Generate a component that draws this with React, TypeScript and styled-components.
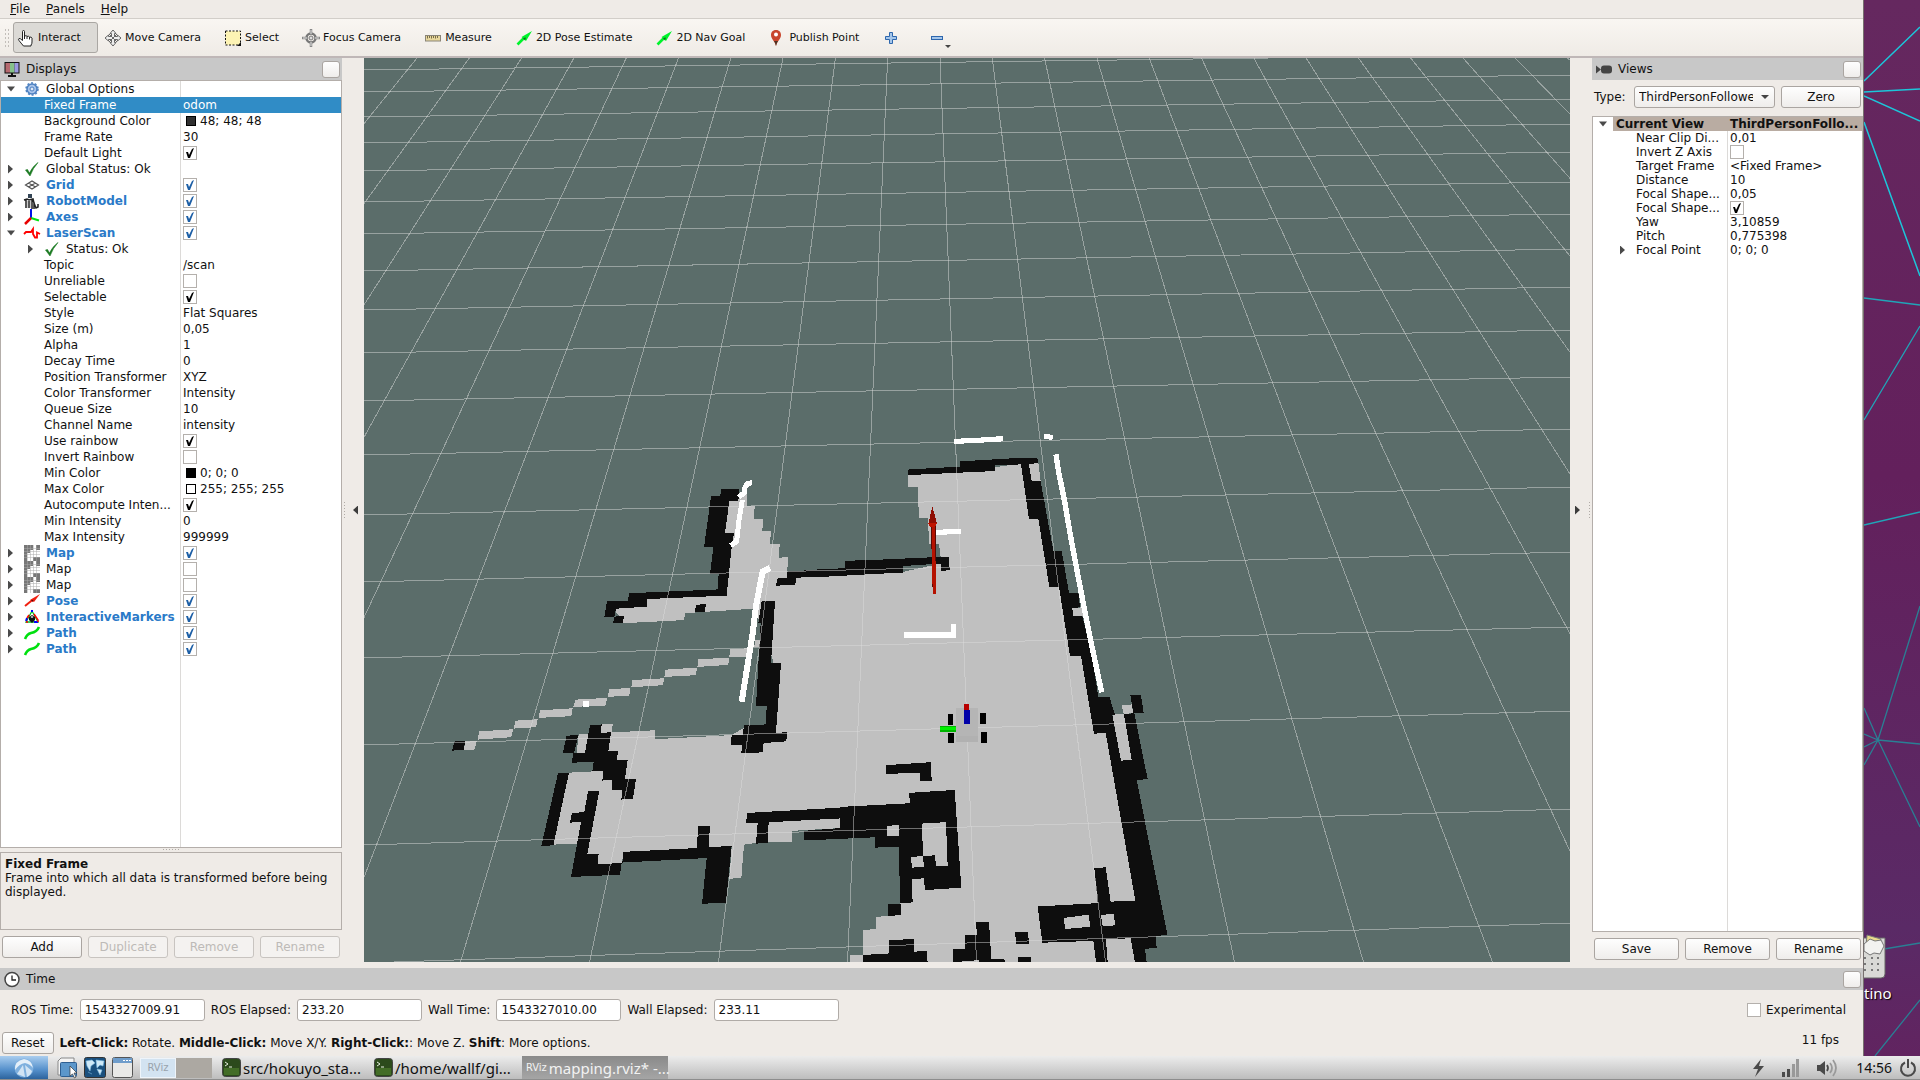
import React from "react";
import styled, { createGlobalStyle, css } from "styled-components";

const GlobalStyle = createGlobalStyle`
  * { box-sizing: border-box; }
  body {
    margin: 0;
    font: 12px/16px "DejaVu Sans", sans-serif;
    color: #111;
    background: #efebe7;
  }
  button, input, select { font: inherit; color: inherit; margin: 0; }
`;

const line = "#b4aeaa";

const raised = css`
  border: 1px solid #aaa5a1;
  border-radius: 3px;
  background: linear-gradient(#fefefe, #efedeb);
`;

/* ---------- shell ---------- */

const Screen = styled.div`
  display: flex;
  flex-direction: column;
  height: 100vh;
  min-height: 760px;
  overflow: hidden;
`;

const Desk = styled.div`
  flex: 1;
  min-height: 0;
  display: grid;
  grid-template-columns: minmax(0, 1fr) 56px;
`;

const Window = styled.main`
  display: flex;
  flex-direction: column;
  min-height: 0;
  border-right: 1px solid #77706f;
  background: #efebe7;
`;

const MenuBar = styled.nav`
  display: flex;
  flex: none;
  height: 19px;
  padding-left: 2px;
  border-bottom: 1px solid #d2cec9;
`;

const MenuItem = styled.button`
  border: 0;
  background: none;
  padding: 0 8px;
  line-height: 16px;
  &::first-letter { text-decoration: underline; }
`;

const ToolBar = styled.div`
  display: flex;
  flex: none;
  align-items: center;
  gap: 2px;
  height: 39px;
  padding-left: 4px;
  background: linear-gradient(#f9f6f2, #efebe6);
  border-bottom: 2px solid #bfb7b7;
  font-size: 11px;
`;

const Grip = styled.div`
  flex: none;
  width: 5px;
  height: 20px;
  margin-right: 2px;
  background: radial-gradient(circle, #c2beb9 1px, transparent 1px) 0 0 / 3px 4px;
`;

const ToolButton = styled.button<{ $active?: boolean }>`
  display: flex;
  align-items: center;
  gap: 4px;
  height: 31px;
  padding: 0 16px 0 4px;
  border: 1px solid transparent;
  border-radius: 3px;
  background: none;
  white-space: nowrap;
  ${(p) => p.$active && css`border-color: #aaa7a3; background: #dcdad6;`}
`;

const ToolIconButton = styled(ToolButton)`
  width: 44px;
  padding-right: 0;
  gap: 0;
`;

const Caret = styled.span`
  align-self: flex-end;
  margin-bottom: 4px;
  border: 3px solid transparent;
  border-top-color: #444;
  border-bottom: 0;
`;

const Icon = styled.svg`
  flex: none;
  display: block;
  overflow: visible;
`;

const Workspace = styled.div`
  flex: 1;
  min-height: 0;
  display: grid;
  grid-template-columns: 342px 22px minmax(0, 1fr) 22px 271px;
`;

const Side = styled.aside`
  display: flex;
  flex-direction: column;
  min-height: 0;
`;

const PanelHeader = styled.header`
  display: flex;
  flex: none;
  align-items: center;
  gap: 6px;
  height: 22px;
  padding: 0 2px 0 4px;
  background: #c8c8c8;
`;

const PanelTitle = styled.h2`
  flex: 1;
  margin: 0;
  font-size: 12px;
  font-weight: 400;
`;

const CloseButton = styled.button`
  ${raised}
  width: 18px;
  height: 17px;
  padding: 0;
`;

const Edge = styled.div<{ $flip?: boolean }>`
  display: flex;
  align-items: center;
  justify-content: space-between;
  flex-direction: ${(p) => (p.$flip ? "row-reverse" : "row")};
  padding: ${(p) => (p.$flip ? "0 2px 0 5px" : "0 6px 0 2px")};
`;

const EdgeGrip = styled.i`
  width: 1px;
  height: 17px;
  background: repeating-linear-gradient(#b0aba6 0 1px, transparent 1px 3px);
`;

const RowGrip = styled.i`
  flex: none;
  width: 17px;
  height: 1px;
  margin: 1px auto 2px;
  background: repeating-linear-gradient(to right, #b0aba6 0 1px, transparent 1px 3px);
`;

const EdgeButton = styled.button<{ $flip?: boolean }>`
  width: 5px;
  height: 9px;
  padding: 0;
  border: 0;
  background: #3c3c3c;
  clip-path: ${(p) => (p.$flip ? "polygon(0 0, 100% 50%, 0 100%)" : "polygon(100% 0, 0 50%, 100% 100%)")};
`;

/* ---------- property tree ---------- */

const TreeBox = styled.div<{ $split: number }>`
  flex: 1;
  min-height: 0;
  overflow: hidden;
  border: 1px solid ${line};
  background: linear-gradient(#dcdad8, #dcdad8) ${(p) => p.$split}px 0 / 1px 100% no-repeat #fff;
`;

const Tree = styled.table<{ $row: number }>`
  width: 100%;
  table-layout: fixed;
  border-collapse: collapse;
  td { padding: 0; height: ${(p) => p.$row}px; }
  td > div { height: ${(p) => p.$row}px; line-height: ${(p) => p.$row}px; }
`;

const Row = styled.tr<{ $selected?: boolean; $head?: boolean }>`
  ${(p) => p.$selected && css`background: #308cc6; color: #fff;`}
  ${(p) => p.$head && css`
    font-weight: 700;
    background: linear-gradient(to right, #fff 20px, #b9aca2 20px);
  `}
`;

const NameCell = styled.div<{ $indent: number; $enabled?: boolean }>`
  display: flex;
  align-items: center;
  padding-left: ${(p) => p.$indent}px;
  white-space: nowrap;
  overflow: visible;
  ${(p) => p.$enabled && css`color: #2a7ac8; font-weight: 700;`}
`;

const ValueCell = styled.div`
  display: flex;
  align-items: center;
  gap: 4px;
  padding-left: 3px;
  white-space: nowrap;
`;

const Twisty = styled.button<{ $open?: boolean }>`
  flex: none;
  width: 8px;
  height: 9px;
  padding: 0;
  border: 0;
  background: #4a4a4a;
  clip-path: ${(p) => (p.$open ? "polygon(0 2px, 100% 2px, 50% 7px)" : "polygon(1px 0, 6px 50%, 1px 100%)")};
`;

const IconSlot = styled.span`
  flex: none;
  width: 16px;
  height: 16px;
  margin: 0 6px 0 9px;
`;

const IconGap = styled.span`
  flex: none;
  width: 9px;
`;

const Swatch = styled.i<{ $color: string }>`
  width: 10px;
  height: 10px;
  margin-left: 3px;
  border: 1px solid #000;
  background: ${(p) => p.$color};
`;

const Check = styled.input<{ $tone?: string }>`
  appearance: none;
  flex: none;
  width: 14px;
  height: 14px;
  border: 1px solid #b4b0ac;
  background: #fff;
  &:checked::after {
    content: "";
    display: block;
    width: 12px;
    height: 12px;
    background: ${(p) => p.$tone || "#000"};
    clip-path: polygon(2px 5px, 4px 5px, 5px 8px, 8px 2px, 10px 1px, 6px 11px, 4px 11px);
  }
`;

const HelpBox = styled.section`
  flex: none;
  height: 78px;
  padding: 4px;
  border: 1px solid ${line};
  line-height: 14px;
`;

const HelpTitle = styled.h3`
  margin: 0;
  font-size: 12px;
`;

const ButtonRow = styled.div<{ $flush?: boolean }>`
  display: grid;
  flex: none;
  grid-auto-flow: column;
  grid-auto-columns: 1fr;
  gap: 6px;
  padding: 6px 2px ${(p) => (p.$flush ? 2 : 4)}px;
`;

const PushButton = styled.button`
  ${raised}
  height: 22px;
  padding: 0 8px;
  line-height: 18px;
  &:disabled { color: #bdbab7; border-color: #c8c4c0; background: #f4f2f0; }
`;

const TypeRow = styled.div`
  display: grid;
  flex: none;
  grid-template-columns: auto 141px 80px;
  align-items: center;
  gap: 6px;
  padding: 6px 2px 8px;
`;

const SelectWrap = styled.span`
  position: relative;
  display: flex;
  &::after {
    content: "";
    position: absolute;
    right: 6px;
    top: 9px;
    border: 4px solid transparent;
    border-top-color: #444;
    border-bottom: 0;
    pointer-events: none;
  }
`;

const Select = styled.select`
  ${raised}
  appearance: none;
  width: 100%;
  height: 22px;
  padding: 0 21px 0 4px;
`;

const SceneBox = styled.section`
  min-height: 0;
  overflow: hidden;
  background: #5b6d6a;
  svg { display: block; width: 100%; height: 100%; }
`;

/* ---------- bottom ---------- */

const TimeHeader = styled(PanelHeader)`margin-top: 6px;`;

const TimeRow = styled.div`
  display: flex;
  flex: none;
  align-items: center;
  gap: 6px;
  height: 40px;
  padding: 0 17px 0 11px;
`;

const Field = styled.input`
  width: 125px;
  height: 22px;
  padding: 0 4px;
  border: 1px solid #b0aba7;
  border-radius: 3px;
  background: #fff;
`;

const Experimental = styled.label`
  display: flex;
  align-items: center;
  gap: 5px;
  margin-left: auto;
`;

const StatusRow = styled.footer`
  display: flex;
  flex: none;
  align-items: center;
  gap: 6px;
  height: 26px;
  padding: 0 24px 0 2px;
`;

const Fps = styled.output`
  margin: 2px 0 0 auto;
  align-self: flex-start;
`;

const TaskBar = styled.footer`
  display: flex;
  flex: none;
  align-items: center;
  height: 24px;
  background: linear-gradient(#ececec, #bdbdbd);
  border-bottom: 1px solid #8d8d8d;
  font: 15px/22px "Noto Sans", sans-serif;
`;

const StartButton = styled.button`
  display: grid;
  place-items: center;
  width: 48px;
  height: 23px;
  margin-right: 8px;
  padding: 0;
  border: 0;
  background: linear-gradient(#a9cdef, #5590cb 60%, #2c639d);
`;

const Launcher = styled.button`
  width: 28px;
  height: 23px;
  padding: 0;
  border: 0;
  background: none;
`;

const Page = styled.button<{ $current?: boolean }>`
  display: grid;
  place-items: center;
  width: 36px;
  height: 20px;
  padding: 0;
  border: 1px solid ${(p) => (p.$current ? "#eef4fa" : "#aca8a2")};
  background: ${(p) => (p.$current ? "#d3e3f1" : "#aca8a2")};
  color: #98a2ac;
  font: 10px/16px "DejaVu Sans", sans-serif;
`;

const Task = styled.button<{ $active?: boolean }>`
  display: flex;
  align-items: center;
  gap: 2px;
  width: 152px;
  height: 23px;
  padding: 0 0 0 10px;
  border: 0;
  background: none;
  white-space: nowrap;
  ${(p) => p.$active && css`
    width: 146px;
    margin-left: 6px;
    padding-left: 4px;
    background: linear-gradient(#8a8a8a, #a5a5a5);
    color: #f2f2f2;
  `}
`;

const TaskMark = styled.span`
  font: 11px/20px "DejaVu Sans Condensed", "DejaVu Sans", sans-serif;
`;

const Tray = styled.div`
  display: flex;
  align-items: center;
  margin-left: auto;
  gap: 17px;
  padding-right: 4px;
`;

const Clock = styled.time`
  font-size: 14px;
  margin-right: -9px;
`;

const Wallpaper = styled.div`
  position: relative;
  overflow: hidden;
  background: linear-gradient(#65285f, #63205c 45%, #5a2a66 88%, #612460);
  > svg { display: block; }
`;

const TrashLabel = styled.span`
  position: absolute;
  left: 0;
  top: 983px;
  color: #fff;
  font: 15px/20px "Noto Sans", sans-serif;
  text-shadow: 1px 1px 1px #000;
`;

/* ---------- small drawings ---------- */

type IconName =
  | "hand" | "move" | "select" | "focus" | "ruler" | "arrow" | "pin" | "plus" | "minus"
  | "monitor" | "gear" | "ok" | "grid" | "robot" | "axes" | "laser" | "map" | "pose"
  | "markers" | "path" | "camera" | "clock";

const glyphs: Record<IconName, React.ReactNode> = {
  hand: <path d="M4.500 10V1.500Q4.500.5 5.500.5t1 1V6q2-.8 2.500.4 2-.6 2.500.7 2-.4 2.500 1V12q0 2-1 3v1H5.500Q3 13 1 10.500 0 9 1 8.500q1-.5 3.500 2zM6.500 6v3M9 6.500V9M11.500 7v2.500" fill="#fff" stroke="#222" />,
  move: <path d="M8 0l3 3.500H9.500V6.500H12.500V5L16 8l-3.500 3V9.500H9.500V12.500H11L8 16l-3-3.500h1.500V9.500H3.500V11L0 8l3.500-3v1.500h3V3.500H5z M4 4l8 8M12 4l-8 8" fill="#eee" stroke="#666" />,
  select: <><rect x=".5" y="1" width="15" height="14" fill="#fdf3b4" stroke="#111" strokeDasharray="2 1.500" /><path d="M16 12v4h-4z" fill="#111" /></>,
  focus: <><circle cx="8" cy="8" r="4.500" fill="none" stroke="#777" strokeWidth="2.500" /><circle cx="8" cy="8" r="2" fill="#ddd" stroke="#777" /><path d="M8-1v5M8 12v5M-1 8h5M12 8h5" stroke="#888" strokeWidth="2.500" /><path d="M8 0v4M8 12v4M0 8h4M12 8h4" stroke="#ddd" /></>,
  ruler: <><rect x=".5" y="5.500" width="15" height="5.500" fill="#e8d79c" stroke="#8a8578" /><path d="M2.500 6v2.500M4.500 6v2M6.500 6v2.500M8.500 6v2M10.500 6v2.500M12.500 6v2" stroke="#776c48" /></>,
  arrow: <><path d="M1.500 14.500L9 7" stroke="#00f32c" strokeWidth="2.600" /><path d="M5.500 7L16 1 10 11z" fill="#00f32c" /><path d="M7 8l3-.5-1 3z" fill="#087018" /></>,
  pin: <><path d="M7 0C3.500 0 2 2.500 2 5c0 4 4 6 5 11 1-5 5-7 5-11 0-2.500-1.500-5-5-5z" fill="#c8452c" /><path d="M5 11q1.500 2 2 5 .5-3 2-5z" fill="#4a3324" /><circle cx="7" cy="4.500" r="2" fill="#fff" /></>,
  plus: <path d="M6.500 2.500h3v4h4v3h-4v4h-3v-4h-4v-3h4z" fill="#a5c6ea" stroke="#2d66ad" />,
  minus: <rect x="2.500" y="6.500" width="11" height="3" fill="#a5c6ea" stroke="#2d66ad" />,
  monitor: <><rect x=".5" y="1" width="15" height="11.500" fill="#111" /><path d="M1.500 2h4.500v9.500H1.500z" fill="#b56a70" /><path d="M6 2h4.500v9.500H6z" fill="#86c28a" /><path d="M10.500 2h4v9.500h-4z" fill="#9a9ae0" /><path d="M7 12h2v2h3v2H4v-2h3z" fill="#111" /></>,
  gear: <><circle cx="8" cy="8" r="5" fill="#a9c4ea" stroke="#4d80c0" strokeWidth="1.500" /><circle cx="8" cy="8" r="6" fill="none" stroke="#4d80c0" strokeWidth="1.500" strokeDasharray="2 1.800" /><circle cx="8" cy="8" r="2" fill="#dfe9f7" stroke="#4d80c0" /></>,
  ok: <path d="M1.500 9l2-.5 2 3.500Q8 6 14 1.500 9 7 6 15z" fill="#1b7a22" stroke="#1b7a22" strokeWidth=".6" />,
  grid: <path d="M1.500 8L8 4l6.500 4L8 12zM4.500 6l7 4M11.500 6l-7 4" fill="none" stroke="#555" strokeWidth="1.200" />,
  robot: <><path d="M4 1h4v4H4z" fill="#345" /><path d="M0 7l3-1 2 1 4-1 1 4 2 5 2-1v-3M2 7v8M5 8v7M8 7v9M10 9v7" fill="none" stroke="#222" strokeWidth="1.500" /><path d="M3.500 8v7M6.500 8v7" stroke="#ccc" /></>,
  axes: <><path d="M7 9V0" stroke="#0010e8" strokeWidth="2" /><path d="M7 9l8 2.500" stroke="#00e010" strokeWidth="2" /><path d="M7 9l-6 6" stroke="#e80000" strokeWidth="2.500" /></>,
  laser: <path d="M0 9L2 7H7L9 4V9L11 12.500H13V7.500L16 9" fill="none" stroke="#f00" strokeWidth="1.800" />,
  map: <><path d="M0 0h16v16H0z" fill="#fff" /><path d="M0 0h9v5H6v3H3v8H0zM12 0h4v5h-4zM9 12h7v4H9z" fill="#777" /><path d="M3.500 0v16M6.500 0v16M9.500 0v16M12.500 0v16M0 3.500h16M0 6.500h16M0 9.500h16M0 12.500h16" stroke="#aaa" strokeWidth=".5" /></>,
  pose: <><path d="M1 13L9 6.500" stroke="#f02010" strokeWidth="2" /><path d="M6 7L16 1 10 9z" fill="#f02010" /><path d="M7 7l2.500 0-1 2z" fill="#600" /></>,
  markers: <><path d="M8 2L2 13h12z" fill="none" stroke="#00c020" strokeWidth="1.300" /><path d="M8 1v2M3 9L2 12M14 13H10" fill="none" stroke="#00f" strokeWidth="2" /><path d="M10 5l4 6v2M2 13h2M5 6L3 9" fill="none" stroke="#f00" strokeWidth="1.500" /><path d="M5 8l3-2 3 2v3l-3 3-3-3z" fill="#111" /><path d="M6.500 8L8 7l1.500 1L8 9z" fill="#eee" /></>,
  path: <path d="M1 14q2-5 6-6 6-1 8-6" fill="none" stroke="#00e010" strokeWidth="2.600" />,
  camera: <><rect x="5" y="4.500" width="11" height="8" rx="3" fill="#444" /><path d="M0 4.500l5 4-5 4z" fill="#444" /></>,
  clock: <><circle cx="8" cy="8.500" r="7" fill="#fff" stroke="#444" strokeWidth="1.500" /><path d="M8 4.500v4.500h4" fill="none" stroke="#222" strokeWidth="1.300" /></>,
};

const Pic = ({ name }: { name: IconName }) => (
  <Icon width="16" height="16" viewBox="0 0 16 16" aria-hidden="true">{glyphs[name]}</Icon>
);

/* ---------- 3D view ---------- */

const rowsOfGrid = [
  [70, 54], [92, 75], [117, 99], [143, 124], [171, 152], [202, 182], [234, 214], [271, 249], [310, 287],
  [353, 330], [401, 377], [455, 429], [515, 487], [582, 552], [658, 627], [745, 711], [845, 809], [963, 923],
];
const columnsOfGrid = Array.from({ length: 23 }, (_, k) => [417 + 52.3 * k, 976.5 + 129 * (k - 10)]);

const west = "translate(420 420) scale(0.33333 0.34439)";
const east = "translate(820 400) scale(0.33333 0.36995)";

const westFloor = [
  "928,235 950,235 955,220 982,215 980,250 1004,250 1002,288 1029,288 1027,323 1053,323 1050,360 1079,360 1077,400 1104,398 1101,460 1450,443 1450,1130 1260,1157 1260,1185 1116,1193 1115,1224 1010,1228 972,1233 964,1330 928,1332 935,1240 610,1256 606,1288 534,1290 470,1230 400,1233 447,1024 548,1019 600,1010 580,961 498,968 470,968 476,913 505,911 545,884 578,884 575,907 705,901 704,927 935,915 970,895 1040,895 1060,700 1022,590 1000,548 857,557 795,561 792,581 612,590 583,550 680,520 920,510 935,370 942,328 915,328",
  "1005,640 1025,640 1022,660 1003,660",
  "930,665 985,663 980,687 928,688", "835,695 927,690 925,711 832,717", "736,725 831,719 828,741 733,746",
  "637,755 732,750 729,770 634,776", "567,782 631,778 628,800 564,804", "466,812 561,807 557,829 460,833",
  "360,843 458,837 454,860 356,865", "286,873 353,869 348,892 282,896", "178,904 279,898 274,921 173,928",
  "136,933 171,931 163,957 131,958",
];
const eastFloor = [
  "264,203 420,195 600,172 655,168 662,220 690,380 705,490 730,510 765,685 795,692 830,880 870,905 955,1355 935,1455 945,1520 90,1520 90,1500 130,1499 129,1433 168,1430 168,1397 205,1395 240,1360 240,1190 100,1150 -60,1140 -60,480 247,465 362,442 362,425 357,388 327,388 324,318 297,318 293,235 264,235",
  "757,563 790,560 792,584 760,584",
  "904,826 935,823 940,846 912,849", "877,850 912,848 935,973 903,976",
];
const westWalls = [
  "903,200 958,200 955,235 928,236 915,328 942,328 935,370 920,510 680,520 680,542 588,548 583,571 553,571 561,527 624,525 627,503 893,492 896,447 870,447 880,370 852,370 873,222 901,220",
  "583,571 612,569 609,590 579,590",
  "828,537 858,534 855,556 825,558",
  "1101,440 1275,430 1277,409 1450,403 1450,443 1128,458 1126,479 1068,481 1073,460 1101,458",
  "1025,527 1065,527 1053,706 1083,706 1068,908 1101,907 1099,933 1031,938 1028,965 964,968 966,943 933,943 935,915 968,914 972,886 1038,884 1040,830 1008,832 1022,590 1015,590",
  "440,917 475,914 462,968 495,966 510,886 545,884 542,908 573,907 565,961 594,961 591,987 623,987 615,1042 648,1042 639,1100 604,1102 607,1074 575,1074 577,1045 547,1047 550,1019 517,1019 521,993 456,995 459,968 428,968",
  "414,1026 447,1024 400,1235 364,1237",
  "504,1078 538,1077 502,1260 536,1260 533,1289 605,1287 600,1320 453,1327 483,1168 450,1169 456,1142 493,1138",
  "610,1254 830,1243 835,1180 870,1178 866,1240 935,1237 918,1401 846,1405 860,1272 607,1285",
  "982,1141 1450,1115 1450,1208 1152,1221 1152,1193 1260,1185 1260,1157 1046,1168 1043,1228 1008,1230 1013,1170 978,1170",
  "104,933 136,932 131,958 96,960",
];
const eastWalls = [
  "264,188 420,180 420,166 590,157 652,157 655,170 627,174 635,218 662,220 700,408 725,408 747,521 775,521 780,560 757,563 760,584 787,584 815,690 835,802 868,802 885,850 877,852 903,975 935,972 912,850 943,846 983,1025 950,1027 1042,1445 1007,1450 1010,1480 975,1484 980,1520 945,1520 932,1455 858,1458 863,1520 828,1520 820,1462 667,1467 653,1369 833,1360 823,1266 857,1263 872,1356 946,1353 857,900 822,902 783,692 750,692 717,505 688,505 655,322 627,321 603,174 525,177 525,192 264,203",
  "931,798 963,798 971,845 940,846",
  "-10,458 75,455 75,436 387,423 389,460 364,462 362,442 247,449 247,466 -10,479",
  "198,987 333,979 335,1031 300,1031 300,1007 198,1011",
  "60,1100 270,1090 267,1062 404,1054 424,1318 315,1325 312,1293 275,1295 278,1358 240,1360 237,1207 165,1210 165,1182 60,1186",
  "204,1363 242,1361 242,1392 205,1395",
  "130,1500 207,1496 207,1460 281,1457 282,1491 320,1490 323,1520 130,1520",
  "400,1485 435,1483 435,1447 471,1445 468,1411 507,1411 514,1511 553,1510 555,1520 478,1520 475,1514 400,1520",
  "585,1438 624,1437 627,1470 589,1471",
  "594,1507 632,1506 633,1520 595,1520",
];
const eastGaps = [
  "732,1400 807,1391 810,1424 735,1430", "843,1392 882,1389 885,1420 848,1423",
  "200,1151 237,1149 237,1178 201,1179", "306,1145 378,1141 383,1259 348,1259 345,1231 309,1232",
  "273,1235 309,1233 312,1262 276,1264",
];

const Shapes = ({ list, at, fill }: { list: string[]; at: string; fill: string }) => (
  <g transform={at} fill={fill}>{list.map((points) => <polygon key={points} points={points} />)}</g>
);

const Scene = () => (
  <svg viewBox="364 58 1206 904" preserveAspectRatio="xMinYMin slice" shapeRendering="crispEdges" role="img" aria-label="3D view">
    <Shapes list={westFloor} at={west} fill="#c0c0c0" />
    <Shapes list={eastFloor} at={east} fill="#c0c0c0" />
    <Shapes list={westWalls} at={west} fill="#0e0e0e" />
    <Shapes list={eastWalls} at={east} fill="#0e0e0e" />
    <Shapes list={eastGaps} at={east} fill="#c0c0c0" />
    <g stroke="#dcdcdc" strokeOpacity=".48">
      {rowsOfGrid.map(([a, b]) => <line key={a} x1="364" y1={a} x2="1570" y2={b} />)}
      {columnsOfGrid.map(([a, b]) => <line key={a} x1={a} y1="58" x2={b} y2="962" />)}
    </g>
    <g transform={west} fill="none" stroke="#fff" strokeWidth="16">
      <path d="M996 182L982 185L974 197L973 211L956 224M967 232L957 290L950 352L932 365" strokeWidth="15" />
      <path d="M1050 430L1028 440L1021 475L1008 540L998 620L965 818" strokeWidth="18" />
      <path d="M489 824H507" />
    </g>
    <g transform={east}>
      <path d="M402 112L535 106V104H549M673 99H686L698 103M345 358L423 355M252 635H408M400 641V606" fill="none" stroke="#fff" strokeWidth="14" />
      <path d="M708 147L715 190L735 280L752 370L775 480L790 550L812 650L845 790" fill="none" stroke="#fff" strokeWidth="16" />
      <path d="M408 833h66v92h-66z" fill="#b5b5b5" />
      <path d="M408 908h66v17h-66z" fill="#b1b1b1" />
      <path d="M384 850h15v28h-15zM480 847h18v29h-18zM385 899h17v29h-17zM483 898h18v29h-18z" fill="#000" />
      <path d="M360 882h48v15h-48z" fill="#00b400" /><path d="M360 885h48v8h-48z" fill="#00f000" />
      <path d="M432 822h15v20h-15z" fill="#b80000" />
      <path d="M432 838h18v38h-18z" fill="#0000a8" />
      <path d="M333 335l4 170h8l3-130v-40z" fill="#5a0a04" />
      <path d="M335 335h10l3 190h-10z" fill="#b51200" />
      <path d="M337 288l14 45-5 8h-16l-5-6z" fill="#8e0d02" />
      <path d="M325 333h26l-5 9h-16z" fill="#c01400" />
    </g>
  </svg>
);

/* ---------- data ---------- */

type Prop = {
  name: string;
  value?: string;
  icon?: IconName;
  swatch?: string;
  checked?: boolean;
  open?: boolean;
  branch?: boolean;
  level?: number;
  selected?: boolean;
};

const displays: Prop[] = [
  { name: "Global Options", icon: "gear", branch: true, open: true },
  { name: "Fixed Frame", value: "odom", selected: true },
  { name: "Background Color", value: "48; 48; 48", swatch: "#303030" },
  { name: "Frame Rate", value: "30" },
  { name: "Default Light", checked: true },
  { name: "Global Status: Ok", icon: "ok", branch: true },
  { name: "Grid", icon: "grid", branch: true, checked: true },
  { name: "RobotModel", icon: "robot", branch: true, checked: true },
  { name: "Axes", icon: "axes", branch: true, checked: true },
  { name: "LaserScan", icon: "laser", branch: true, open: true, checked: true },
  { name: "Status: Ok", icon: "ok", branch: true, level: 1 },
  { name: "Topic", value: "/scan" },
  { name: "Unreliable", checked: false },
  { name: "Selectable", checked: true },
  { name: "Style", value: "Flat Squares" },
  { name: "Size (m)", value: "0,05" },
  { name: "Alpha", value: "1" },
  { name: "Decay Time", value: "0" },
  { name: "Position Transformer", value: "XYZ" },
  { name: "Color Transformer", value: "Intensity" },
  { name: "Queue Size", value: "10" },
  { name: "Channel Name", value: "intensity" },
  { name: "Use rainbow", checked: true },
  { name: "Invert Rainbow", checked: false },
  { name: "Min Color", value: "0; 0; 0", swatch: "#000" },
  { name: "Max Color", value: "255; 255; 255", swatch: "#fff" },
  { name: "Autocompute Inten...", checked: true },
  { name: "Min Intensity", value: "0" },
  { name: "Max Intensity", value: "999999" },
  { name: "Map", icon: "map", branch: true, checked: true },
  { name: "Map", icon: "map", branch: true, checked: false },
  { name: "Map", icon: "map", branch: true, checked: false },
  { name: "Pose", icon: "pose", branch: true, checked: true },
  { name: "InteractiveMarkers", icon: "markers", branch: true, checked: true },
  { name: "Path", icon: "path", branch: true, checked: true },
  { name: "Path", icon: "path", branch: true, checked: true },
];

const viewProps: Prop[] = [
  { name: "Near Clip Di...", value: "0,01" },
  { name: "Invert Z Axis", checked: false },
  { name: "Target Frame", value: "<Fixed Frame>" },
  { name: "Distance", value: "10" },
  { name: "Focal Shape...", value: "0,05" },
  { name: "Focal Shape...", checked: true },
  { name: "Yaw", value: "3,10859" },
  { name: "Pitch", value: "0,775398" },
  { name: "Focal Point", value: "0; 0; 0", branch: true },
];

const tools: { label: string; icon: IconName }[] = [
  { label: "Interact", icon: "hand" },
  { label: "Move Camera", icon: "move" },
  { label: "Select", icon: "select" },
  { label: "Focus Camera", icon: "focus" },
  { label: "Measure", icon: "ruler" },
  { label: "2D Pose Estimate", icon: "arrow" },
  { label: "2D Nav Goal", icon: "arrow" },
  { label: "Publish Point", icon: "pin" },
];

const times = [
  ["ROS Time:", "1543327009.91"],
  ["ROS Elapsed:", "233.20"],
  ["Wall Time:", "1543327010.00"],
  ["Wall Elapsed:", "233.11"],
];

const Value = ({ p }: { p: Prop }) => (
  <ValueCell>
    {p.swatch && <Swatch $color={p.swatch} />}
    {p.checked !== undefined && (
      <Check type="checkbox" aria-label={p.name} defaultChecked={p.checked} $tone={p.icon ? "#1d5fa6" : "#000"} />
    )}
    {p.value}
  </ValueCell>
);

const DisplaysPanel = () => (
  <Side>
    <PanelHeader>
      <Pic name="monitor" />
      <PanelTitle>Displays</PanelTitle>
      <CloseButton aria-label="Close displays" />
    </PanelHeader>
    <TreeBox $split={179}>
      <Tree $row={16}>
        <colgroup><col width="179" /><col /></colgroup>
        <tbody>
          {displays.map((p, i) => (
            <Row key={i} $selected={p.selected}>
              <td>
                <NameCell $indent={p.branch ? 6 + (p.level || 0) * 20 : 43} $enabled={!!p.icon && p.checked}>
                  {p.branch && <Twisty $open={p.open} aria-label={`Toggle ${p.name}`} />}
                  {p.icon && <IconSlot><Pic name={p.icon} /></IconSlot>}
                  {p.name}
                </NameCell>
              </td>
              <td><Value p={p} /></td>
            </Row>
          ))}
        </tbody>
      </Tree>
    </TreeBox>
    <RowGrip />
    <HelpBox>
      <HelpTitle>Fixed Frame</HelpTitle>
      Frame into which all data is transformed before being displayed.
    </HelpBox>
    <ButtonRow>
      <PushButton>Add</PushButton>
      <PushButton disabled>Duplicate</PushButton>
      <PushButton disabled>Remove</PushButton>
      <PushButton disabled>Rename</PushButton>
    </ButtonRow>
  </Side>
);

const ViewsPanel = () => (
  <Side>
    <PanelHeader>
      <Pic name="camera" />
      <PanelTitle>Views</PanelTitle>
      <CloseButton aria-label="Close views" />
    </PanelHeader>
    <TypeRow>
      <label htmlFor="view-type">Type:</label>
      <SelectWrap>
        <Select id="view-type"><option>ThirdPersonFollower</option></Select>
      </SelectWrap>
      <PushButton>Zero</PushButton>
    </TypeRow>
    <TreeBox $split={134}>
      <Tree $row={14}>
        <colgroup><col width="134" /><col /></colgroup>
        <tbody>
          <Row $head>
            <td><NameCell $indent={6}><Twisty $open aria-label="Toggle current view" /><IconGap />Current View</NameCell></td>
            <td><ValueCell>ThirdPersonFollo...</ValueCell></td>
          </Row>
          {viewProps.map((p, i) => (
            <Row key={i}>
              <td>
                <NameCell $indent={p.branch ? 26 : 43}>
                  {p.branch && <><Twisty aria-label={`Toggle ${p.name}`} /><IconGap /></>}
                  {p.name}
                </NameCell>
              </td>
              <td><Value p={p} /></td>
            </Row>
          ))}
        </tbody>
      </Tree>
    </TreeBox>
    <ButtonRow $flush>
      <PushButton>Save</PushButton>
      <PushButton>Remove</PushButton>
      <PushButton>Rename</PushButton>
    </ButtonRow>
  </Side>
);

const Terminal = () => (
  <Icon width="19" height="20" viewBox="0 0 19 20" aria-hidden="true">
    <rect x=".5" y=".5" width="18" height="18" rx="3" fill="#2c4a1c" stroke="#444" />
    <path d="M2 10h15v7H2z" fill="#54862f" opacity=".6" />
    <path d="M3 4l3 2-3 2M7 9h3" fill="none" stroke="#e8f0e0" />
  </Icon>
);

const Desktop = () => (
  <Wallpaper>
    <svg width="56" height="1056" viewBox="0 0 56 1056" fill="none" aria-hidden="true">
      <path d="M0 81L56 27M0 92l56-3M0 96l56 25M0 122l56 154" stroke="#1cc6da" strokeWidth="1.500" />
      <path d="M0 298l56 7M0 420l56-94M0 525l56-13" stroke="#20a5b8" strokeWidth="1.300" />
      <path d="M14 740L56 606M14 740l42 4M14 740l42 87M14 740L0 708M14 740L0 734M14 740L0 747M14 740L0 765M20 949l36-6M11 1056l45-56" stroke="#2a7f94" strokeWidth="1.300" />
      <path d="M-6 938h27v36q0 4-4 4H-6z" fill="#d9d9d6" stroke="#666" />
      <path d="M3 935l14 4-3 9-12-2z" fill="#eadb8c" stroke="#777" />
      <path d="M0 944l6-5 5 2 6-1 3 6-4 8-6-1-4 2-6-4z" fill="#f2f2f0" stroke="#777" />
      <path d="M1 957v18M8 957v18M14 957v18" stroke="#777" strokeWidth="2" strokeDasharray="2 4" />
    </svg>
    <TrashLabel>tino</TrashLabel>
  </Wallpaper>
);

const Panel = () => (
  <TaskBar>
    <StartButton aria-label="Menu">
      <Icon width="22" height="20" viewBox="0 0 22 20">
        <circle cx="11" cy="10" r="9.500" fill="#7fb0de" />
        <path d="M2 12Q1 3 11 1q8 1 9 9-3-4-8-5-6 1-10 7z" fill="#e4eff9" />
        <path d="M4 16l6-9 2 12zM12 7l7 6q-1 4-5 6z" fill="#d2e4f4" />
      </Icon>
    </StartButton>
    <Launcher aria-label="Files">
      <Icon width="23" height="22" viewBox="0 0 23 22">
        <path d="M2 4l3-3h13v17H2z" fill="#f4f4f4" stroke="#888" />
        <rect x="4.500" y="5.500" width="16" height="14" rx="1" fill="#5c97cb" stroke="#2e5f92" />
        <path d="M14 9v10l2.500-2 2 4 1.500-1-2-4h3z" fill="#fff" stroke="#333" strokeWidth=".7" />
      </Icon>
    </Launcher>
    <Launcher aria-label="Web browser">
      <Icon width="23" height="22" viewBox="0 0 23 22">
        <rect x=".5" y=".5" width="21" height="20" rx="2" fill="#1a507e" stroke="#333" />
        <path d="M2 4l6-1 3 3-4 3-1 5-3-5zM12 3l8 1-1 5-3-1-3 3zM13 12l5 1-2 5zM4 15l4 2" fill="#cfe9f7" stroke="#7dbbe0" strokeWidth=".6" />
      </Icon>
    </Launcher>
    <Launcher aria-label="Show desktop">
      <Icon width="23" height="22" viewBox="0 0 23 22">
        <rect x=".5" y=".5" width="20" height="20" rx="2" fill="#e9e9e7" stroke="#555" />
        <path d="M1 1h19v5H1z" fill="#6f9dcb" /><path d="M11 3.500h2M14 3.500h2M17 3.500h2" stroke="#fff" />
      </Icon>
    </Launcher>
    <Page $current>RViz</Page>
    <Page aria-label="Desktop 2" />
    <Task><Terminal />src/hokuyo_sta...</Task>
    <Task><Terminal />/home/wallf/gi...</Task>
    <Task $active><TaskMark>RViz</TaskMark>mapping.rviz* -...</Task>
    <Tray>
      <Icon width="12" height="18" viewBox="0 0 12 18"><path d="M8 0L0 10h5l-3 8 9-11H6z" fill="#4a4a4a" /></Icon>
      <Icon width="18" height="18" viewBox="0 0 18 18"><path d="M0 13h3v5H0zM5 10h3v8H5z" fill="#4a4a4a" /><path d="M10 5h3v13h-3zM14 0h3v18h-3z" fill="#999" /></Icon>
      <Icon width="22" height="18" viewBox="0 0 22 18"><path d="M0 6h3l5-4v14l-5-4H0z" fill="#4a4a4a" /><path d="M10 6q2 3 0 6" fill="none" stroke="#4a4a4a" strokeWidth="1.800" /><path d="M13 4q4 5 0 10M16 1q6 8 0 16" fill="none" stroke="#999" strokeWidth="1.800" /></Icon>
      <Clock>14:56</Clock>
      <Icon width="16" height="18" viewBox="0 0 16 18"><path d="M5 3.500a7 7 0 1 0 6 0M8 0v9" fill="none" stroke="#4a4a4a" strokeWidth="2" /></Icon>
    </Tray>
  </TaskBar>
);

export default function App() {
  return (
    <Screen>
      <GlobalStyle />
      <Desk>
        <Window>
          <MenuBar>
            <MenuItem>File</MenuItem>
            <MenuItem>Panels</MenuItem>
            <MenuItem>Help</MenuItem>
          </MenuBar>
          <ToolBar>
            <Grip />
            {tools.map((t, i) => (
              <ToolButton key={t.label} $active={i === 0}><Pic name={t.icon} />{t.label}</ToolButton>
            ))}
            <ToolIconButton aria-label="Add tool"><Pic name="plus" /></ToolIconButton>
            <ToolIconButton aria-label="Remove tool"><Pic name="minus" /><Caret /></ToolIconButton>
          </ToolBar>
          <Workspace>
            <DisplaysPanel />
            <Edge><EdgeGrip /><EdgeButton aria-label="Hide left side" /></Edge>
            <SceneBox><Scene /></SceneBox>
            <Edge $flip><EdgeGrip /><EdgeButton $flip aria-label="Hide right side" /></Edge>
            <ViewsPanel />
          </Workspace>
          <TimeHeader>
            <Pic name="clock" />
            <PanelTitle>Time</PanelTitle>
            <CloseButton aria-label="Close time" />
          </TimeHeader>
          <TimeRow>
            {times.map(([label, value], i) => (
              <React.Fragment key={label}>
                <label htmlFor={`time-${i}`}>{label}</label>
                <Field id={`time-${i}`} defaultValue={value} />
              </React.Fragment>
            ))}
            <Experimental><Check type="checkbox" />Experimental</Experimental>
          </TimeRow>
          <StatusRow>
            <PushButton>Reset</PushButton>
            <span>
              <b>Left-Click:</b> Rotate. <b>Middle-Click:</b> Move X/Y. <b>Right-Click:</b>: Move Z. <b>Shift</b>: More options.
            </span>
            <Fps>11 fps</Fps>
          </StatusRow>
        </Window>
        <Desktop />
      </Desk>
      <Panel />
    </Screen>
  );
}
